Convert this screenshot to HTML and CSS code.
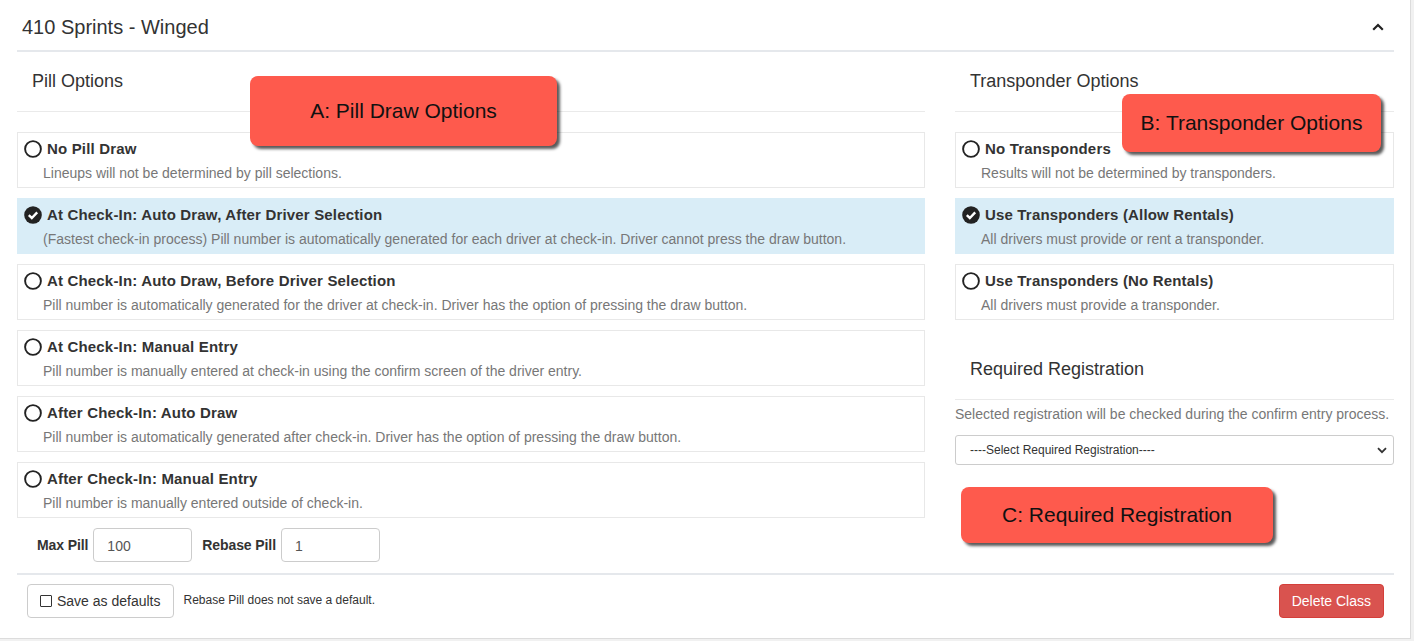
FILE: index.html
```html
<!DOCTYPE html>
<html>
<head>
<meta charset="utf-8">
<link rel="stylesheet" href="styles.css">
</head>
<body>
<div class="card">
  <div class="card-header">
    <span class="card-title">410 Sprints - Winged</span>
    <svg class="chev" width="12" height="8" viewBox="0 0 12 8"><path d="M1.2 6.8 L6 2 L10.8 6.8" fill="none" stroke="#222" stroke-width="2.2"/></svg>
  </div>
  <div class="card-body">
    <div class="col-left">
      <div class="sec-head">Pill Options</div>
      <div class="opts">
        <div class="opt">
          <div class="opt-title"><svg class="ico" width="18" height="18" viewBox="0 0 18 18"><circle cx="9" cy="9" r="7.9" fill="none" stroke="#222" stroke-width="1.9"/></svg>No Pill Draw</div>
          <div class="opt-desc">Lineups will not be determined by pill selections.</div>
        </div>
        <div class="opt sel">
          <div class="opt-title"><svg class="ico" width="18" height="18" viewBox="0 0 18 18"><circle cx="9" cy="9" r="8.8" fill="#222"/><path d="M4.8 9.2 L7.8 12 L13.2 6.4" fill="none" stroke="#fff" stroke-width="2.4"/></svg>At Check-In: Auto Draw, After Driver Selection</div>
          <div class="opt-desc">(Fastest check-in process) Pill number is automatically generated for each driver at check-in. Driver cannot press the draw button.</div>
        </div>
        <div class="opt">
          <div class="opt-title"><svg class="ico" width="18" height="18" viewBox="0 0 18 18"><circle cx="9" cy="9" r="7.9" fill="none" stroke="#222" stroke-width="1.9"/></svg>At Check-In: Auto Draw, Before Driver Selection</div>
          <div class="opt-desc">Pill number is automatically generated for the driver at check-in. Driver has the option of pressing the draw button.</div>
        </div>
        <div class="opt">
          <div class="opt-title"><svg class="ico" width="18" height="18" viewBox="0 0 18 18"><circle cx="9" cy="9" r="7.9" fill="none" stroke="#222" stroke-width="1.9"/></svg>At Check-In: Manual Entry</div>
          <div class="opt-desc">Pill number is manually entered at check-in using the confirm screen of the driver entry.</div>
        </div>
        <div class="opt">
          <div class="opt-title"><svg class="ico" width="18" height="18" viewBox="0 0 18 18"><circle cx="9" cy="9" r="7.9" fill="none" stroke="#222" stroke-width="1.9"/></svg>After Check-In: Auto Draw</div>
          <div class="opt-desc">Pill number is automatically generated after check-in. Driver has the option of pressing the draw button.</div>
        </div>
        <div class="opt">
          <div class="opt-title"><svg class="ico" width="18" height="18" viewBox="0 0 18 18"><circle cx="9" cy="9" r="7.9" fill="none" stroke="#222" stroke-width="1.9"/></svg>After Check-In: Manual Entry</div>
          <div class="opt-desc">Pill number is manually entered outside of check-in.</div>
        </div>
      </div>
      <div class="pill-row">
        <label class="pill-label">Max Pill</label>
        <input class="pill-input" type="text" value="100">
        <label class="pill-label second">Rebase Pill</label>
        <input class="pill-input" type="text" value="1">
      </div>
    </div>
    <div class="col-right">
      <div class="sec-head">Transponder Options</div>
      <div class="opts">
        <div class="opt">
          <div class="opt-title"><svg class="ico" width="18" height="18" viewBox="0 0 18 18"><circle cx="9" cy="9" r="7.9" fill="none" stroke="#222" stroke-width="1.9"/></svg>No Transponders</div>
          <div class="opt-desc">Results will not be determined by transponders.</div>
        </div>
        <div class="opt sel">
          <div class="opt-title"><svg class="ico" width="18" height="18" viewBox="0 0 18 18"><circle cx="9" cy="9" r="8.8" fill="#222"/><path d="M4.8 9.2 L7.8 12 L13.2 6.4" fill="none" stroke="#fff" stroke-width="2.4"/></svg>Use Transponders (Allow Rentals)</div>
          <div class="opt-desc">All drivers must provide or rent a transponder.</div>
        </div>
        <div class="opt">
          <div class="opt-title"><svg class="ico" width="18" height="18" viewBox="0 0 18 18"><circle cx="9" cy="9" r="7.9" fill="none" stroke="#222" stroke-width="1.9"/></svg>Use Transponders (No Rentals)</div>
          <div class="opt-desc">All drivers must provide a transponder.</div>
        </div>
      </div>
      <div class="sec-head reg">Required Registration</div>
      <div class="reg-help">Selected registration will be checked during the confirm entry process.</div>
      <div class="select">
        <span>----Select Required Registration----</span>
        <svg width="10" height="7" viewBox="0 0 10 7"><path d="M1 1.2 L5 5.2 L9 1.2" fill="none" stroke="#333" stroke-width="1.8"/></svg>
      </div>
    </div>
  </div>
  <div class="card-footer">
    <div class="footer-left">
      <button class="btn btn-default"><span class="chk"></span>Save as defaults</button>
      <span class="footer-note">Rebase Pill does not save a default.</span>
    </div>
    <button class="btn btn-danger">Delete Class</button>
  </div>
  <div class="callout call-a">A: Pill Draw Options</div>
  <div class="callout call-b">B: Transponder Options</div>
  <div class="callout call-c">C: Required Registration</div>
</div>
</body>
</html>
```
FILE: styles.css
```css
html, body {
  margin: 0;
  padding: 0;
  background: #f1f1f1;
  font-family: "Liberation Sans", Arial, sans-serif;
  color: #333;
}
.card {
  position: relative;
  width: 1411px;
  height: 639px;
  box-sizing: border-box;
  background: #fff;
  border-right: 1px solid #dcdcdc;
  border-bottom: 1px solid #dcdcdc;
}
.card-header {
  margin: 0 16px 0 17px;
  height: 45px;
  border-bottom: 2px solid #e5e8ec;
  display: flex;
  align-items: center;
  justify-content: space-between;
  padding: 5px 10px 0 5px;
}
.card-title {
  font-size: 20px;
  color: #333;
}
.chev {
  display: block;
  margin-top: -2px;
}
.card-body {
  display: flex;
  gap: 30px;
  margin: 0 16px 0 17px;
}
.col-left {
  width: 908px;
}
.col-right {
  width: 439px;
}
.sec-head {
  height: 60px;
  box-sizing: border-box;
  border-bottom: 1px solid #eaeaea;
  padding-left: 15px;
  font-size: 18px;
  line-height: 58px;
  color: #333;
}
.sec-head.reg {
  margin-top: 20px;
}
.opts {
  margin-top: 20px;
}
.opt {
  height: 56px;
  box-sizing: border-box;
  border: 1px solid #e8e8e8;
  margin-bottom: 10px;
  padding: 6px 0 0 6px;
}
.opt.sel {
  background: #d9edf7;
  border-color: #d9edf7;
}
.opt-title {
  display: flex;
  align-items: center;
  font-size: 15px;
  font-weight: bold;
  line-height: 20px;
  letter-spacing: 0.17px;
  color: #333;
}
.ico {
  display: block;
  margin-right: 5px;
  flex: none;
}
.opt-desc {
  margin: 4px 0 0 19px;
  font-size: 14px;
  line-height: 20px;
  color: #777;
}
.pill-row {
  display: flex;
  align-items: center;
  padding-left: 20px;
  height: 34px;
}
.pill-label {
  font-size: 14px;
  font-weight: bold;
  letter-spacing: -0.1px;
  color: #333;
  margin-right: 5px;
}
.pill-label.second {
  margin-left: 10px;
}
.pill-input {
  width: 99px;
  height: 34px;
  box-sizing: border-box;
  border: 1px solid #ccc;
  border-radius: 4px;
  padding: 2px 12px 0 13px;
  font-family: "Liberation Sans", Arial, sans-serif;
  font-size: 14px;
  color: #555;
}
.reg-help {
  margin-top: 4px;
  font-size: 14px;
  line-height: 20px;
  color: #777;
}
.select {
  margin-top: 11px;
  height: 30px;
  box-sizing: border-box;
  border: 1px solid #ccc;
  border-radius: 3px;
  display: flex;
  align-items: center;
  justify-content: space-between;
  padding: 0 6px 0 14px;
  font-size: 12px;
  color: #333;
}
.select svg {
  display: block;
}
.card-footer {
  margin: 11px 16px 0 17px;
  border-top: 2px solid #e5e8ec;
  padding: 9px 10px 0 10px;
  display: flex;
  justify-content: space-between;
  align-items: flex-start;
}
.footer-left {
  display: flex;
  align-items: center;
  gap: 10px;
}
.btn {
  height: 34px;
  box-sizing: border-box;
  border-radius: 4px;
  font-family: "Liberation Sans", Arial, sans-serif;
  font-size: 14px;
  display: flex;
  align-items: center;
  white-space: nowrap;
  cursor: pointer;
}
.btn-default {
  padding: 0 12px;
  background: #fff;
  border: 1px solid #ccc;
  color: #333;
}
.chk {
  width: 10px;
  height: 10px;
  border: 1px solid #333;
  border-radius: 1px;
  margin-right: 5px;
  flex: none;
}
.footer-note {
  font-size: 12px;
  color: #333;
  margin-top: -2px;
}
.btn-danger {
  padding: 0 12px;
  justify-content: center;
  background: #d9534f;
  border: 1px solid #d43f3a;
  color: #fff;
}
.callout {
  position: absolute;
  background: #fe5a4d;
  border-radius: 8px;
  box-shadow: 3px 3px 3px rgba(0, 0, 0, 0.65);
  display: flex;
  align-items: center;
  justify-content: center;
  font-size: 21px;
  color: #111;
}
.call-a { left: 250px; top: 76px; width: 307px; height: 70px; }
.call-b { left: 1122px; top: 94px; width: 259px; height: 58px; }
.call-c { left: 961px; top: 487px; width: 312px; height: 56px; }
```
